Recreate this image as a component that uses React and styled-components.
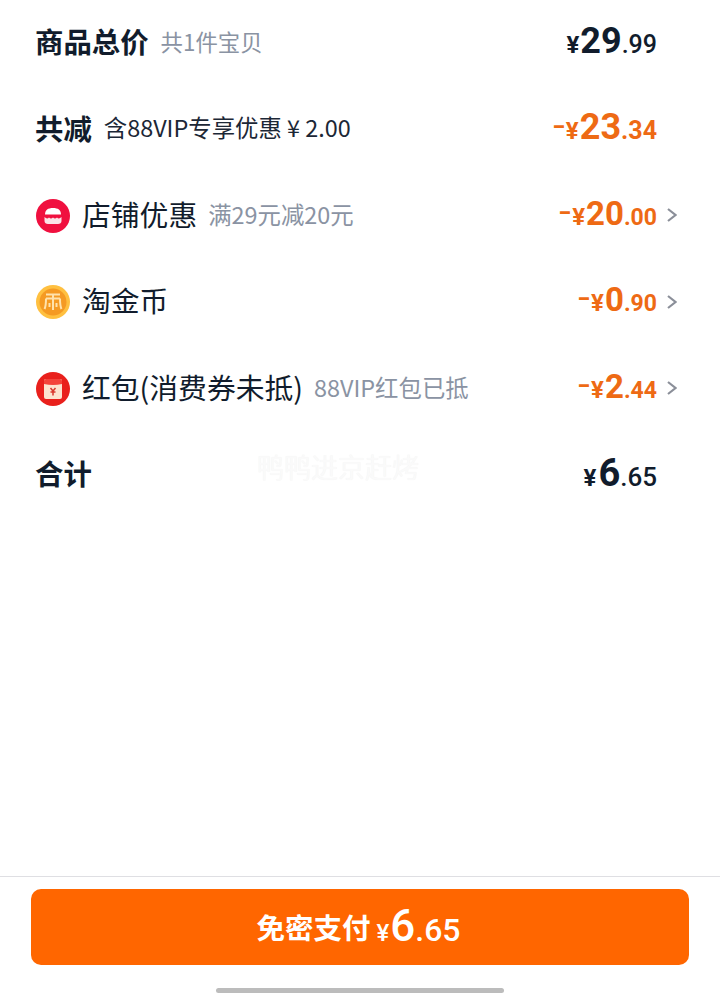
import React from 'react';
import styled, { createGlobalStyle } from 'styled-components';

const GlobalStyle = createGlobalStyle`
  html, body {
    margin: 0;
    padding: 0;
    background: #fff;
  }
  * {
    box-sizing: border-box;
  }
`;

const cjk = `"Noto Sans CJK SC", "Noto Sans", sans-serif`;
const num = `Roboto, "Noto Sans", sans-serif`;

const Page = styled.div`
  position: relative;
  width: 720px;
  height: 996px;
  display: flex;
  flex-direction: column;
  font-family: ${cjk};
  color: #111c2c;
  overflow: hidden;
`;

const List = styled.div`
  flex: 1;
  display: flex;
  flex-direction: column;
`;

const Row = styled.div`
  height: 86.4px;
  display: flex;
  align-items: center;
  padding: 0 43px 0 36px;
`;

const Title = styled.span`
  font-size: 28.4px;
  font-weight: 700;
  line-height: 1;
  margin: 0 12px 3px -1px;
`;

const Label = styled.span`
  font-size: 28.8px;
  font-weight: 400;
  line-height: 1;
  margin: 0 11px 3px 12px;
`;

const Note = styled.span`
  font-size: ${p => p.$size || 23.4}px;
  line-height: 1;
  margin-bottom: 3px;
  color: ${p => (p.$dark ? '#1c2736' : '#8a93a3')};
`;

const Price = styled.div`
  margin: 0 ${p => (p.$arrow ? '0' : '20px')} 5px auto;
  display: flex;
  align-items: baseline;
  font-family: ${num};
  font-weight: 700;
  line-height: 1;
  color: ${p => (p.$orange ? '#ee6a14' : '#111c2c')};
`;

const Minus = styled.span`
  width: 14px;
  font-size: 24px;
  transform-origin: left center;
  transform: translateY(-5px) scaleX(1.5);
`;

const Yen = styled.span`
  font-size: ${p => p.$size || 24}px;
  margin-right: ${p => p.$gap || 1}px;
`;

const Whole = styled.span`
  font-size: ${p => p.$size || 36}px;
`;

const Cents = styled.span`
  font-size: ${p => p.$size || 25}px;
  font-weight: ${p => (p.$light ? 500 : 700)};
`;

const Chevron = styled.svg`
  width: 10px;
  height: 14px;
  margin: 0 0 1px 10px;
  flex: none;
`;

const Watermark = styled.div`
  position: absolute;
  left: 257px;
  top: 450px;
  font-size: 27px;
  line-height: 33px;
  color: #fafafa;
  text-shadow: 0 0 1px #f2f2f2;
  white-space: nowrap;
`;

const Footer = styled.div`
  height: 120px;
  border-top: 1px solid #dfdfe3;
  padding: 12px 31px 0;
  display: flex;
  flex-direction: column;
  align-items: center;
`;

const PayButton = styled.button`
  width: 658px;
  height: 76px;
  border: none;
  border-radius: 10px;
  background: #ff6600;
  color: #fff;
  font-family: ${cjk};
  display: flex;
  align-items: center;
  justify-content: center;
  padding: 0 3px 0 0;
`;

const PayText = styled.span`
  font-size: 28.5px;
  font-weight: 700;
  line-height: 1;
  margin: 1px 6px 0 0;
`;

const PayPrice = styled.span`
  display: flex;
  align-items: baseline;
  font-family: ${num};
  font-weight: 500;
  line-height: 1;
  margin-bottom: 2px;
`;

const PayWhole = styled.span`
  font-size: 44px;
`;

const PayCents = styled.span`
  font-size: 32px;
`;

const HomeBar = styled.div`
  width: 288px;
  height: 5px;
  margin-top: 23px;
  border-radius: 3px;
  background: #bcbcbc;
`;

const Arrow = () => (
  <Chevron viewBox="0 0 10 14">
    <path d="M1 1 L8.5 7 L1 13" fill="none" stroke="#8b8f99" strokeWidth="2.2" />
  </Chevron>
);

const ShopIcon = () => (
  <svg width="34" height="34" viewBox="0 0 34 34">
    <circle cx="17" cy="17" r="17" fill="#f0103f" />
    <path d="M9 15.5 C9 11 12 9 17 9 C22 9 25 11 25 15.5 Z" fill="#fff" />
    <path d="M8.5 18 Q11 20.5 13 18.5 Q15 20.5 17 18.5 Q19 20.5 21 18.5 Q23 20.5 25.5 18 V22 C25.5 24 24 25 22 25 H12 C10 25 8.5 24 8.5 22 Z" fill="#fbe3e7" />
  </svg>
);

const CoinIcon = () => (
  <svg width="34" height="34" viewBox="0 0 34 34">
    <circle cx="17" cy="17" r="17" fill="#ffc040" />
    <circle cx="17" cy="17" r="13.5" fill="#f59a23" />
    <path d="M10 9.5 H24 M17 9.5 V13 M10 13.5 C10 19 9.5 22 8.5 24 M24 13.5 C24 19 24.5 22 25.5 24 M10 13.5 H24 M17 13.5 V25 M13.5 18 V22 M20.5 18 V22" fill="none" stroke="#ffe2ac" strokeWidth="2" />
  </svg>
);

const PacketIcon = () => (
  <svg width="34" height="34" viewBox="0 0 34 34">
    <circle cx="17" cy="17" r="17" fill="#e9201c" />
    <rect x="8" y="7" width="18" height="20" rx="2" fill="#fde3cf" />
    <path d="M8 9 C8 8 9 7 10 7 H24 C25 7 26 8 26 9 V12 Q17 14 8 12 Z" fill="#f4433a" />
    <path d="M14.5 16 L17 19 L19.5 16 M14.5 20 H19.5 M17 19 V23.5" fill="none" stroke="#d9382e" strokeWidth="1.5" />
  </svg>
);

const Money = ({ minus, whole, cents, orange, arrow, size, centsSize, light, yenGap }) => (
  <>
    <Price $orange={orange} $arrow={arrow}>
      {minus && <Minus>-</Minus>}
      <Yen $gap={yenGap}>¥</Yen>
      <Whole $size={size}>{whole}</Whole>
      <Cents $light={light} $size={centsSize}>.{cents}</Cents>
    </Price>
    {arrow && <Arrow />}
  </>
);

export default function App() {
  return (
    <Page>
      <GlobalStyle />
      <List>
        <Row>
          <Title>商品总价</Title>
          <Note $size={22.4}>共1件宝贝</Note>
          <Money whole="29" cents="99" light />
        </Row>
        <Row>
          <Title>共减</Title>
          <Note $dark>含88VIP专享优惠 ¥ 2.00</Note>
          <Money minus whole="23" cents="34" orange />
        </Row>
        <Row>
          <ShopIcon />
          <Label>店铺优惠</Label>
          <Note>满29元减20元</Note>
          <Money minus whole="20" cents="00" orange arrow size={33} centsSize={23} />
        </Row>
        <Row>
          <CoinIcon />
          <Label>淘金币</Label>
          <Money minus whole="0" cents="90" orange arrow size={33} centsSize={23} />
        </Row>
        <Row>
          <PacketIcon />
          <Label>红包(消费券未抵)</Label>
          <Note>88VIP红包已抵</Note>
          <Money minus whole="2" cents="44" orange arrow size={33} centsSize={23} />
        </Row>
        <Row>
          <Title>合计</Title>
          <Money whole="6" cents="65" light size={38} centsSize={26} yenGap={2} />
        </Row>
      </List>
      <Watermark>鸭鸭进京赶烤</Watermark>
      <Footer>
        <PayButton>
          <PayText>免密支付</PayText>
          <PayPrice>
            <Yen $size={24}>¥</Yen>
            <PayWhole>6</PayWhole>
            <PayCents>.65</PayCents>
          </PayPrice>
        </PayButton>
        <HomeBar />
      </Footer>
    </Page>
  );
}
